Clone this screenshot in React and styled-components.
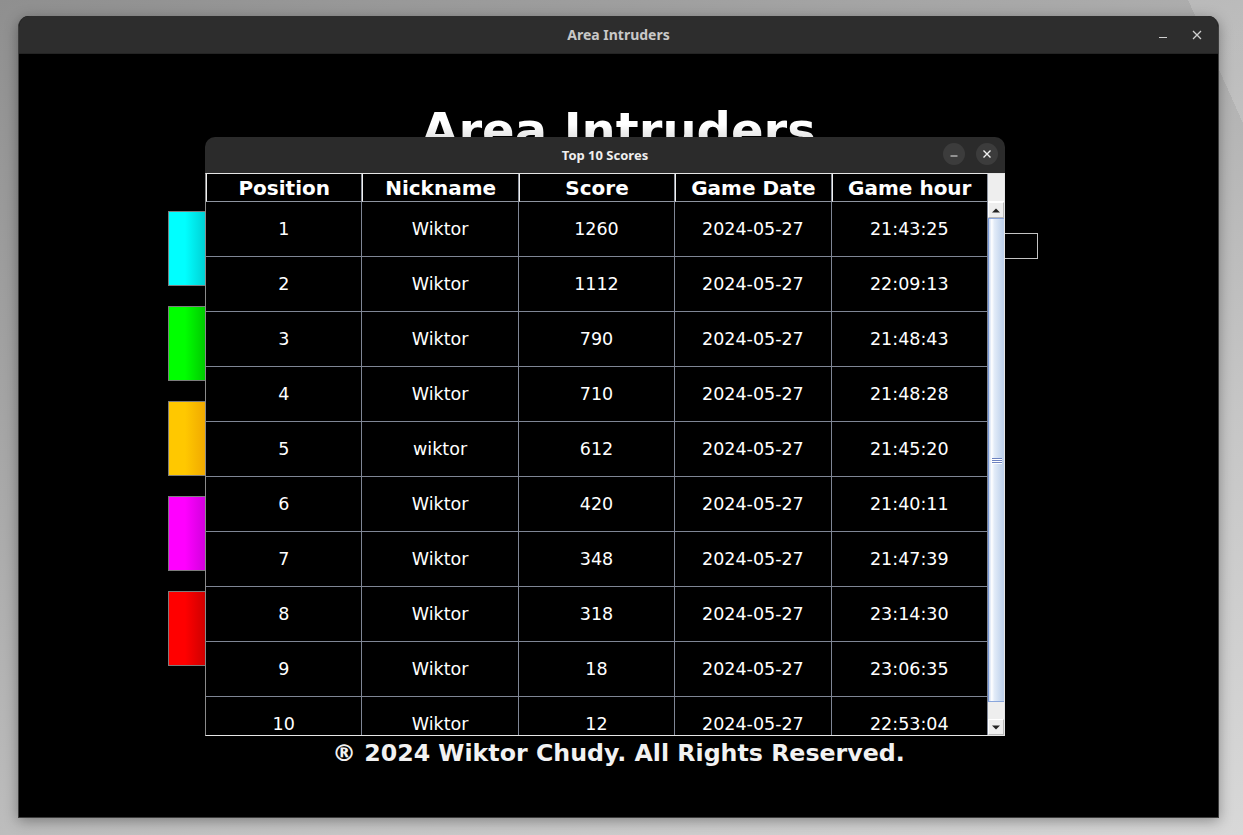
import React from "react";
import styled, { createGlobalStyle } from "styled-components";

const GlobalStyle = createGlobalStyle`
  html, body {
    margin: 0;
    padding: 0;
  }
  body {
    font-family: "DejaVu Sans", "Liberation Sans", sans-serif;
    background: #b0b0b0;
  }
  * {
    box-sizing: border-box;
  }
`;

const Desktop = styled.div`
  width: 1243px;
  height: 835px;
  padding: 16px 24px 17px 18px;
  overflow: hidden;
  background:
    linear-gradient(66deg, transparent 96.6%, rgba(255, 255, 255, 0.16) 96.6%),
    linear-gradient(155deg, #8f8f8f 0%, #a9a9a9 35%, #c6c6c6 70%, #d8d8d8 100%);
`;

const Window = styled.div`
  width: 1201px;
  height: 802px;
  display: flex;
  flex-direction: column;
  border-radius: 11px 11px 0 0;
  border: 1px solid #3d3d3d;
  border-top: none;
  background: #000;
  box-shadow: 0 3px 14px rgba(0, 0, 0, 0.35);
  overflow: hidden;
`;

const TitleBar = styled.div`
  position: relative;
  height: 38px;
  flex-shrink: 0;
  display: flex;
  align-items: center;
  justify-content: center;
  background: #2d2d2d;
  border-bottom: 1px solid #242424;
`;

const TitleText = styled.span`
  font-family: "Noto Sans", "DejaVu Sans", sans-serif;
  font-weight: 700;
  font-size: 14px;
  color: #c8c8c8;
`;

const WinControls = styled.div`
  position: absolute;
  right: 12px;
  top: 0;
  height: 100%;
  display: flex;
  align-items: center;
  gap: 16px;
`;

const WinButton = styled.div`
  width: 18px;
  height: 18px;
  display: flex;
  align-items: center;
  justify-content: center;
`;

const Content = styled.div`
  position: relative;
  flex: 1;
  display: flex;
  flex-direction: column;
  align-items: stretch;
`;

const GameTitle = styled.h1`
  margin: 48px 0 0;
  text-align: center;
  font-family: "DejaVu Sans", sans-serif;
  font-weight: 700;
  font-size: 48px;
  line-height: 56px;
  background: linear-gradient(to bottom, #ffffff 40%, #bdbdbd 100%);
  -webkit-background-clip: text;
  background-clip: text;
  color: transparent;
`;

const Board = styled.div`
  margin-top: 53px;
  display: flex;
  justify-content: space-between;
  align-items: flex-start;
  padding: 0 180px 0 149px;
`;

const ColorColumn = styled.div`
  display: flex;
  flex-direction: column;
  gap: 20px;
`;

const ColorButton = styled.div`
  width: 120px;
  height: 75px;
  border: 1px solid #7c7c7c;
  background: linear-gradient(
    to right,
    ${(p) => p.$color} 0px,
    ${(p) => p.$color} 16px,
    ${(p) => p.$dark} 37px,
    ${(p) => p.$dark} 100%
  );
`;

const NameField = styled.div`
  margin-top: 22px;
  width: 200px;
  height: 26px;
  border: 1px solid #c4c4c4;
  background: #000;
`;

const Footer = styled.div`
  margin-top: 73px;
  text-align: center;
  font-family: "DejaVu Sans", sans-serif;
  font-weight: 700;
  font-size: 23.7px;
  line-height: 28px;
  color: #f2f2f2;
`;

const Dialog = styled.div`
  position: absolute;
  left: 186px;
  top: 83px;
  width: 800px;
  height: 599px;
  display: flex;
  flex-direction: column;
  background: #000;
  border-radius: 10px 10px 0 0;
  overflow: hidden;
`;

const DialogBar = styled.div`
  position: relative;
  height: 36px;
  flex-shrink: 0;
  display: flex;
  align-items: center;
  justify-content: center;
  background: #2b2b2b;
`;

const DialogTitle = styled.span`
  font-family: "Noto Sans", "DejaVu Sans", sans-serif;
  font-weight: 700;
  font-size: 13px;
  color: #efefef;
`;

const DialogControls = styled.div`
  position: absolute;
  right: 7px;
  top: 6px;
  display: flex;
  gap: 11px;
`;

const RoundButton = styled.div`
  width: 22px;
  height: 22px;
  border-radius: 50%;
  background: #3c3c3c;
  display: flex;
  align-items: center;
  justify-content: center;
`;

const TableFrame = styled.div`
  flex: 1;
  display: flex;
  border-left: 1px solid #8a8a8a;
  border-right: 1px solid #e6e6e6;
  border-bottom: 1px solid #e6e6e6;
  border-top: 1px solid #e6e6e6;
  min-height: 0;
`;

const TableArea = styled.div`
  flex: 1;
  display: flex;
  flex-direction: column;
  min-width: 0;
`;

const Row = styled.div`
  display: grid;
  grid-template-columns: repeat(5, 1fr);
  flex-shrink: 0;
`;

const HeadCell = styled.div`
  height: 28px;
  display: flex;
  align-items: center;
  justify-content: center;
  border-left: 1px solid #f0f0f0;
  border-right: 1px solid #8e949f;
  border-bottom: 1px solid #8e949f;
  font-weight: 700;
  font-size: 20px;
  color: #ffffff;
`;

const Body = styled.div`
  flex: 1;
  overflow: hidden;
`;

const Cell = styled.div`
  height: 55px;
  display: flex;
  align-items: center;
  justify-content: center;
  border-right: 1px solid #7f8695;
  border-bottom: 1px solid #7f8695;
  font-size: 17.5px;
  color: #ffffff;
`;

const ScrollBar = styled.div`
  width: 16px;
  flex-shrink: 0;
  display: flex;
  flex-direction: column;
  background: #eeeeee;
`;

const ScrollCorner = styled.div`
  height: 28px;
  background: #eeeeee;
  border-bottom: 1px solid #ffffff;
`;

const ArrowButton = styled.div`
  height: 16px;
  flex-shrink: 0;
  display: flex;
  align-items: center;
  justify-content: center;
  background: #eeeeee;
  border: 1px solid #ffffff;
  border-right-color: #b8b8b8;
  border-bottom-color: #b8b8b8;
`;

const Track = styled.div`
  flex: 1;
  display: flex;
  flex-direction: column;
  background: #eeeeee;
`;

const Thumb = styled.div`
  height: 484px;
  display: flex;
  align-items: center;
  justify-content: center;
  border-left: 1px solid #7a9ad8;
  border-top: 1px solid #8aa6dc;
  border-bottom: 1px solid #8aa6dc;
  background: linear-gradient(
    to right,
    #c7d7f0 0%,
    #ffffff 18%,
    #e3ecf8 35%,
    #c9d9ef 75%,
    #bccfeb 100%
  );
`;

const Grip = styled.div`
  width: 10px;
  display: flex;
  flex-direction: column;
  gap: 1px;
  & > span {
    display: block;
    height: 1px;
    background: #6d82c0;
    box-shadow: 0 1px 0 #ffffff;
  }
`;

const colors = [
  ["#00ffff", "#00cfd3"],
  ["#00ff00", "#00c800"],
  ["#ffc800", "#f0a800"],
  ["#ff00ff", "#d000dc"],
  ["#ff0000", "#cc0000"],
];

const scores = [
  [1, "Wiktor", 1260, "2024-05-27", "21:43:25"],
  [2, "Wiktor", 1112, "2024-05-27", "22:09:13"],
  [3, "Wiktor", 790, "2024-05-27", "21:48:43"],
  [4, "Wiktor", 710, "2024-05-27", "21:48:28"],
  [5, "wiktor", 612, "2024-05-27", "21:45:20"],
  [6, "Wiktor", 420, "2024-05-27", "21:40:11"],
  [7, "Wiktor", 348, "2024-05-27", "21:47:39"],
  [8, "Wiktor", 318, "2024-05-27", "23:14:30"],
  [9, "Wiktor", 18, "2024-05-27", "23:06:35"],
  [10, "Wiktor", 12, "2024-05-27", "22:53:04"],
];

const headers = ["Position", "Nickname", "Score", "Game Date", "Game hour"];

const App = () => (
  <>
    <GlobalStyle />
    <Desktop>
      <Window>
        <TitleBar>
          <TitleText>Area Intruders</TitleText>
          <WinControls>
            <WinButton>
              <svg width="10" height="10" viewBox="0 0 10 10">
                <line x1="1" y1="7.5" x2="9" y2="7.5" stroke="#d0d0d0" strokeWidth="1.2" />
              </svg>
            </WinButton>
            <WinButton>
              <svg width="10" height="10" viewBox="0 0 10 10">
                <path d="M1 1 L9 9 M9 1 L1 9" stroke="#d0d0d0" strokeWidth="1.3" />
              </svg>
            </WinButton>
          </WinControls>
        </TitleBar>
        <Content>
          <GameTitle>Area Intruders</GameTitle>
          <Board>
            <ColorColumn>
              {colors.map(([c, d]) => (
                <ColorButton key={c} $color={c} $dark={d} />
              ))}
            </ColorColumn>
            <NameField />
          </Board>
          <Footer>® 2024 Wiktor Chudy. All Rights Reserved.</Footer>

          <Dialog>
            <DialogBar>
              <DialogTitle>Top 10 Scores</DialogTitle>
              <DialogControls>
                <RoundButton>
                  <svg width="10" height="10" viewBox="0 0 10 10">
                    <line x1="1.5" y1="7" x2="8.5" y2="7" stroke="#e8e8e8" strokeWidth="1.2" />
                  </svg>
                </RoundButton>
                <RoundButton>
                  <svg width="10" height="10" viewBox="0 0 10 10">
                    <path d="M1.5 1.5 L8.5 8.5 M8.5 1.5 L1.5 8.5" stroke="#f0f0f0" strokeWidth="1.4" />
                  </svg>
                </RoundButton>
              </DialogControls>
            </DialogBar>
            <TableFrame>
              <TableArea>
                <Row>
                  {headers.map((h) => (
                    <HeadCell key={h}>{h}</HeadCell>
                  ))}
                </Row>
                <Body>
                  {scores.map((r) => (
                    <Row key={r[0]}>
                      {r.map((v, i) => (
                        <Cell key={i}>{v}</Cell>
                      ))}
                    </Row>
                  ))}
                </Body>
              </TableArea>
              <ScrollBar>
                <ScrollCorner />
                <ArrowButton>
                  <svg width="8" height="5" viewBox="0 0 8 5">
                    <path d="M0 4.5 L4 0.5 L8 4.5 Z" fill="#222" />
                  </svg>
                </ArrowButton>
                <Track>
                  <Thumb>
                    <Grip>
                      <span />
                      <span />
                      <span />
                    </Grip>
                  </Thumb>
                </Track>
                <ArrowButton>
                  <svg width="8" height="5" viewBox="0 0 8 5">
                    <path d="M0 0.5 L4 4.5 L8 0.5 Z" fill="#222" />
                  </svg>
                </ArrowButton>
              </ScrollBar>
            </TableFrame>
          </Dialog>
        </Content>
      </Window>
    </Desktop>
  </>
);

export default App;
